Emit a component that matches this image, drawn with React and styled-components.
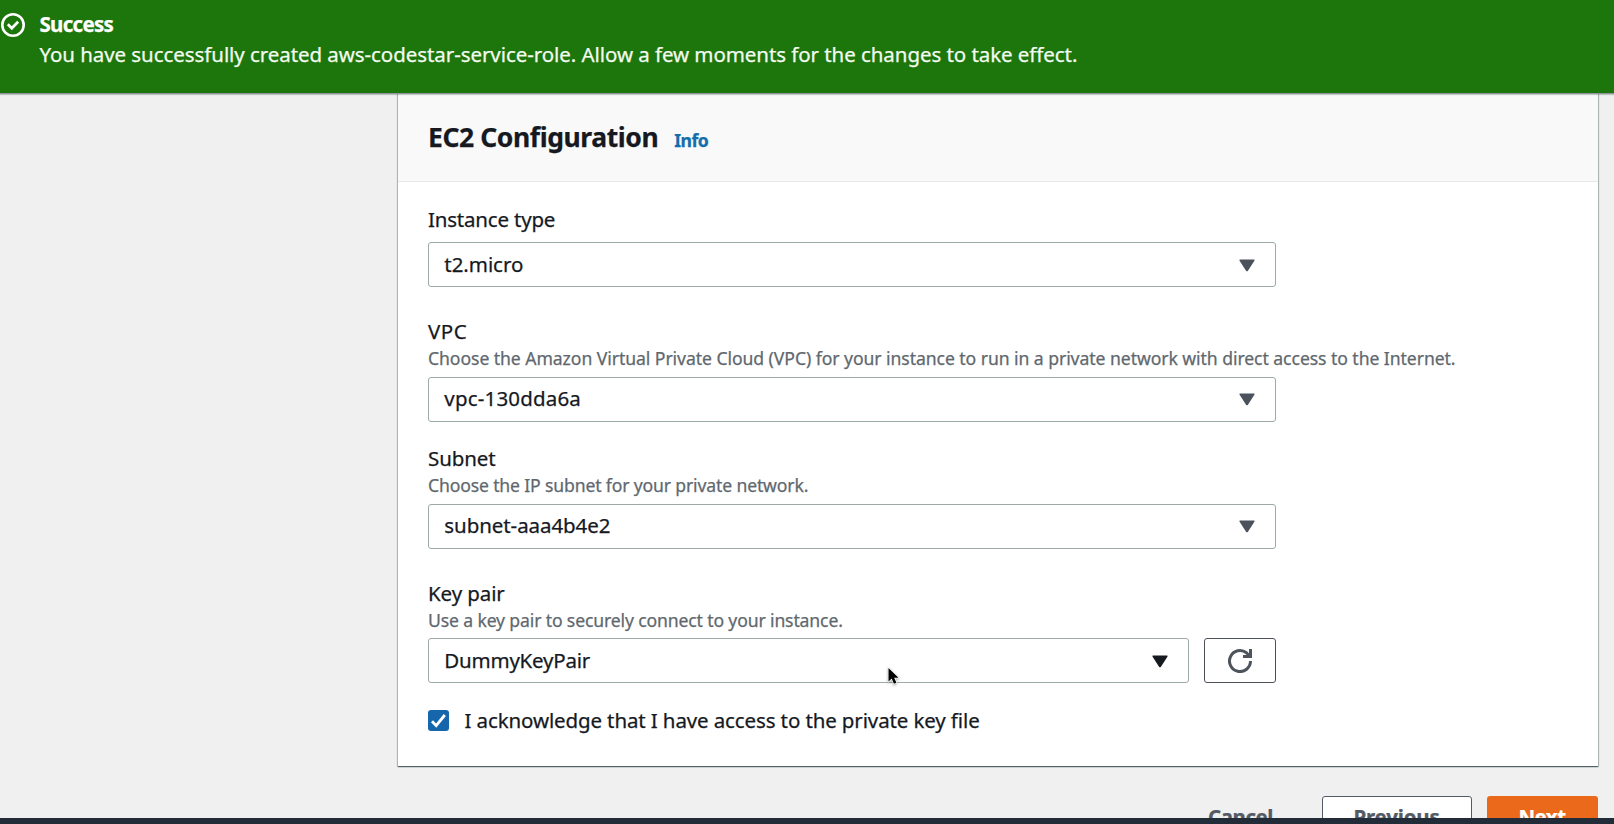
import React from "react";
import styled, { createGlobalStyle } from "styled-components";

const GlobalStyle = createGlobalStyle`
  * { box-sizing: border-box; }
  html, body { margin: 0; padding: 0; }
  body {
    overflow: hidden;
    background: #f0f0f0;
    color: #16191f;
    font-family: "Noto Sans", "Open Sans", sans-serif;
    font-size: 20.5px;
    -webkit-text-stroke-width: 0.25px;
  }
`;

const Page = styled.div`
  position: relative;
  display: flex;
  flex-direction: column;
  width: 1614px;
  height: 824px;
  overflow: hidden;
`;

const Flash = styled.header`
  flex: none;
  display: flex;
  gap: 14px;
  height: 93px;
  padding: 9px 0 0 1px;
  background: #1d760b;
  color: #fff;
  box-shadow: 0 1px 0 #8e959b, 0 2px 1px rgba(0, 28, 36, 0.22);
  z-index: 1;
`;

const FlashIcon = styled.svg`
  flex: none;
  width: 24px;
  height: 24px;
  margin-top: 4px;
`;

const FlashBody = styled.div`
  display: flex;
  flex-direction: column;
`;

const FlashLine = styled.div`
  line-height: 30px;
  white-space: nowrap;
  font-weight: ${(p) => (p.$bold ? 700 : 400)};
  letter-spacing: ${(p) => p.$track}px;
  padding-left: 0.5px;
  color: ${(p) => (p.$bold ? "#fff" : "#f3fbf1")};
`;

const Content = styled.main`
  flex: none;
  display: flex;
  flex-direction: column;
  height: 725px;
  padding: 0 16px 0 398px;
  overflow: hidden;
`;

const Card = styled.section`
  flex: none;
  height: 673px;
  background: #fff;
  box-shadow: 0 1px 1px rgba(0, 28, 36, 0.45), 1px 1px 1px rgba(0, 28, 36, 0.22),
    -1px 1px 1px rgba(0, 28, 36, 0.22);
`;

const CardHeader = styled.div`
  display: flex;
  align-items: baseline;
  gap: 16px;
  height: 89px;
  padding: 26px 30px 0;
  background: #f9f9f9;
  border-bottom: 1px solid #e7e9e9;
`;

const Title = styled.h2`
  margin: 0;
  font-size: 26.5px;
  font-weight: 700;
  line-height: 36px;
  letter-spacing: -0.41px;
`;

const InfoLink = styled.a`
  font-size: 17.6px;
  font-weight: 700;
  letter-spacing: -0.55px;
  color: #146eab;
`;

const Form = styled.div`
  display: flex;
  flex-direction: column;
  padding: 25px 30px 0;
`;

const Field = styled.div`
  display: flex;
  flex-direction: column;
  margin-bottom: ${(p) => p.$after}px;
`;

const Label = styled.label`
  line-height: 24px;
  white-space: nowrap;
  letter-spacing: ${(p) => p.$track}px;
`;

const Description = styled.div`
  margin-top: 3px;
  font-size: 17.6px;
  line-height: 24px;
  white-space: nowrap;
  color: #5f686e;
  letter-spacing: ${(p) => p.$track}px;
`;

const ControlRow = styled.div`
  display: flex;
  gap: 15px;
  width: 848px;
  margin-top: ${(p) => p.$before}px;
`;

const Select = styled.div`
  flex: 1;
  display: flex;
  align-items: center;
  justify-content: space-between;
  height: 45px;
  padding: 0 20px ${(p) => (p.$raised ? 3 : 1)}px 15.3px;
  border: 1px solid #9ea9aa;
  border-radius: 3px;
  background: #fff;
  letter-spacing: ${(p) => p.$track}px;
`;

const CaretIcon = styled.svg`
  width: 16px;
  height: 13px;
  margin-top: 2px;
  fill: ${(p) => p.$color};
`;

const RefreshButton = styled.button`
  display: flex;
  align-items: center;
  justify-content: center;
  width: 72px;
  height: 45px;
  padding: 0;
  border: 1px solid #4c5158;
  border-radius: 3px;
  background: #fff;
`;

const CheckRow = styled.label`
  display: flex;
  align-items: center;
  gap: 15.5px;
  height: 30px;
  letter-spacing: -0.12px;
  white-space: nowrap;
`;

const CheckBox = styled.span`
  display: flex;
  width: 21px;
  height: 21px;
  border-radius: 3px;
  background: #1666ab;
`;

const Actions = styled.div`
  flex: none;
  display: flex;
  justify-content: flex-end;
  gap: 15px;
  margin-top: 30px;
`;

const Button = styled.button`
  width: ${(p) => p.$width}px;
  height: 45px;
  padding: 0 1px 4px 0;
  border: 1px solid ${(p) => (p.$kind === "normal" ? "#545b64" : "transparent")};
  border-radius: 3px;
  background: ${(p) => ({ link: "transparent", normal: "#fff", primary: "#ea691b" })[p.$kind]};
  background-clip: border-box;
  color: ${(p) => (p.$kind === "primary" ? "#fff" : "#545b64")};
  font: 700 20.5px/30px "Noto Sans", sans-serif;
  letter-spacing: ${(p) => p.$track}px;
`;

const FooterBar = styled.footer`
  flex: none;
  height: 6px;
  background: #222b38;
`;

const Cursor = styled.svg`
  position: absolute;
  left: 886px;
  top: 666px;
  width: 16px;
  height: 22px;
  z-index: 2;
  filter: drop-shadow(0 1px 1px rgba(0, 0, 0, 0.35));
`;

function Caret({ color }) {
  return (
    <CaretIcon $color={color} viewBox="0 0 16 13">
      <path d="M1.2 0.5h13.6c.7 0 1 .7.6 1.2L8.8 11.9c-.4.6-1.2.6-1.6 0L.6 1.7C.2 1.2.5.5 1.2.5z" />
    </CaretIcon>
  );
}

function SelectField({ label, labelTrack, description, descTrack, value, valueTrack, before, after, raised, caret = "#4b525c", action }) {
  return (
    <Field $after={after}>
      <Label $track={labelTrack}>{label}</Label>
      {description && <Description $track={descTrack}>{description}</Description>}
      <ControlRow $before={before}>
        <Select $track={valueTrack} $raised={raised}>
          <span>{value}</span>
          <Caret color={caret} />
        </Select>
        {action}
      </ControlRow>
    </Field>
  );
}

export default function App() {
  return (
    <>
      <GlobalStyle />
      <Page>
        <Flash>
          <FlashIcon viewBox="0 0 24 24" fill="none" stroke="#fff">
            <circle cx="12" cy="12" r="10.7" strokeWidth="2.6" />
            <path d="M6.8 11.3l4 4 6.3-6.5" strokeWidth="2.7" />
          </FlashIcon>
          <FlashBody>
            <FlashLine $bold $track={-0.7}>Success</FlashLine>
            <FlashLine $track={-0.065}>
              You have successfully created aws-codestar-service-role. Allow a few moments for the changes to take effect.
            </FlashLine>
          </FlashBody>
        </Flash>

        <Content>
          <Card>
            <CardHeader>
              <Title>EC2 Configuration</Title>
              <InfoLink>Info</InfoLink>
            </CardHeader>
            <Form>
              <SelectField
                label="Instance type"
                labelTrack={-0.2}
                value="t2.micro"
                valueTrack={-0.05}
                before={11}
                after={32}
              />
              <SelectField
                label="VPC"
                labelTrack={0.5}
                description="Choose the Amazon Virtual Private Cloud (VPC) for your instance to run in a private network with direct access to the Internet."
                descTrack={-0.062}
                value="vpc-130dda6a"
                valueTrack={0.18}
                before={7}
                after={24}
                raised
              />
              <SelectField
                label="Subnet"
                labelTrack={-0.1}
                description="Choose the IP subnet for your private network."
                descTrack={-0.15}
                value="subnet-aaa4b4e2"
                valueTrack={-0.07}
                before={7}
                after={32}
                raised
              />
              <SelectField
                label="Key pair"
                labelTrack={-0.1}
                description="Use a key pair to securely connect to your instance."
                descTrack={-0.14}
                value="DummyKeyPair"
                valueTrack={-0.22}
                caret="#16191f"
                before={6}
                after={22}
                action={
                  <RefreshButton aria-label="Refresh">
                    <svg width="24" height="24" viewBox="0 0 24 24" fill="none" stroke="#4e545c" strokeWidth="3">
                      <path d="M22.5 12A10.5 10.5 0 1 1 18.5 3.8L21.5 7" />
                      <path d="M21 0h3v9h-9V6h3.500L21 4z" fill="#4e545c" stroke="none" />
                    </svg>
                  </RefreshButton>
                }
              />
              <CheckRow>
                <CheckBox>
                  <svg width="21" height="21" viewBox="0 0 21 21" fill="none" stroke="#fff" strokeWidth="2.8">
                    <path d="M4 11.2l4.2 4.5L16.8 5" />
                  </svg>
                </CheckBox>
                I acknowledge that I have access to the private key file
              </CheckRow>
            </Form>
          </Card>
          <Actions>
            <Button $kind="link" $width={132} $track={-0.45}>Cancel</Button>
            <Button $kind="normal" $width={150} $track={-0.2}>Previous</Button>
            <Button $kind="primary" $width={111} $track={-0.55}>Next</Button>
          </Actions>
        </Content>
        <FooterBar />

        <Cursor viewBox="0 0 16 22">
          <path
            d="M2.5 2v13.5l3.2-2.9 2.2 5.2 2.5-1.1-2.2-5h4.3z"
            fill="#000"
            stroke="#fff"
            strokeWidth="1.4"
            paintOrder="stroke"
          />
        </Cursor>
      </Page>
    </>
  );
}
